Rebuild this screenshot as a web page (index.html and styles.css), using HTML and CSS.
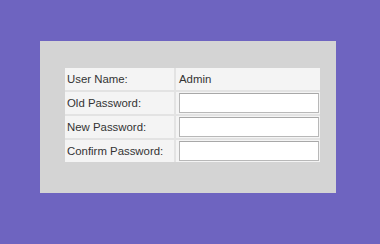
FILE: index.html
```html
<!DOCTYPE html>
<html lang="en">
<head>
    <meta charset="UTF-8">
    <title>Change Password</title>
    <link rel="stylesheet" href="styles.css">
</head>
<body>
    <div class="panel">
        <table class="pw-table">
            <tr>
                <td class="label">User Name:</td>
                <td class="value">Admin</td>
            </tr>
            <tr>
                <td class="label">Old Password:</td>
                <td class="value"><input type="password"></td>
            </tr>
            <tr>
                <td class="label">New Password:</td>
                <td class="value"><input type="password"></td>
            </tr>
            <tr>
                <td class="label">Confirm Password:</td>
                <td class="value"><input type="password"></td>
            </tr>
        </table>
    </div>
</body>
</html>
```

FILE: styles.css
```css
body {
    margin: 0;
    padding: 41px 0 0 40px;
    background-color: #6e64c0;
    font-family: 'Liberation Sans', Arial, sans-serif;
    font-size: 11.4px;
    color: #333;
    height: 244px;
    box-sizing: border-box;
}
.panel {
    width: 296px;
    height: 152px;
    box-sizing: border-box;
    padding: 27px 16px 0 25px;
    background-color: #d4d4d4;
}
.pw-table {
    width: 255px;
    border-collapse: collapse;
    background-color: #f4f4f4;
}
.pw-table td {
    height: 22px;
    padding: 0;
    border-bottom: 2px solid #e3e3e3;
    vertical-align: middle;
}
.pw-table tr:last-child td {
    border-bottom: none;
}
.label {
    width: 107px;
    padding-left: 2px !important;
    border-right: 2px solid #e3e3e3;
}
.value {
    padding-left: 3px !important;
}
.value input {
    display: block;
    width: 140px;
    height: 20px;
    box-sizing: border-box;
    margin: 0;
    padding: 1px 3px;
    border: 1px solid #b8b8b8;
    border-top-color: #a8a8a8;
    background: #fff;
    font: inherit;
}
```
